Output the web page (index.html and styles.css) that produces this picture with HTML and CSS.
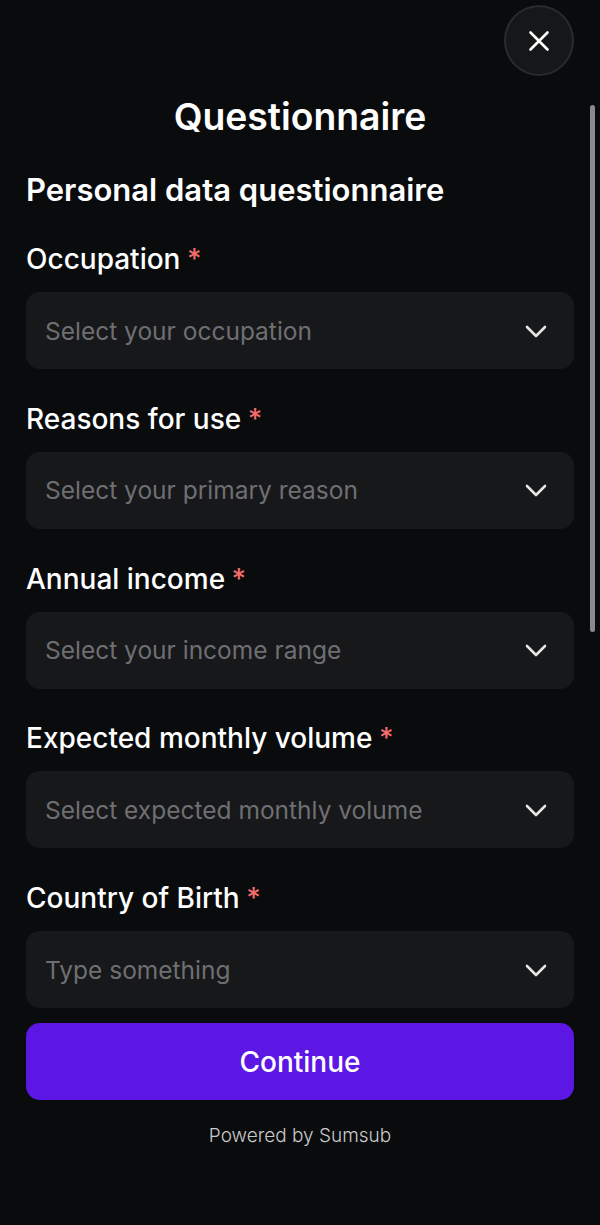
FILE: index.html
```html
<!DOCTYPE html>
<html lang="en">
<head>
    <meta charset="UTF-8">
    <meta name="viewport" content="width=device-width, initial-scale=1.0">
    <title>Questionnaire</title>
    <link rel="stylesheet" href="styles.css">
</head>
<body>
    <div class="page">
        <div class="top-bar">
            <button class="close-btn" type="button" aria-label="Close">
                <svg width="24" height="24" viewBox="0 0 24 24" fill="none" stroke="#fff" stroke-width="2.6" stroke-linecap="round">
                    <path d="M3.5 3.5L20.5 20.5M20.5 3.5L3.5 20.5"/>
                </svg>
            </button>
        </div>
        <h1>Questionnaire</h1>
        <form class="form">
            <h2>Personal data questionnaire</h2>
            <div class="field">
                <label>Occupation <span class="req">*</span></label>
                <div class="select">
                    <span>Select your occupation</span>
                    <svg class="chevron" width="22" height="14" viewBox="0 0 22 14" fill="none"><path d="M2 3L11 12L20 3"/></svg>
                </div>
            </div>
            <div class="field">
                <label>Reasons for use <span class="req">*</span></label>
                <div class="select">
                    <span>Select your primary reason</span>
                    <svg class="chevron" width="22" height="14" viewBox="0 0 22 14" fill="none"><path d="M2 3L11 12L20 3"/></svg>
                </div>
            </div>
            <div class="field">
                <label>Annual income <span class="req">*</span></label>
                <div class="select">
                    <span>Select your income range</span>
                    <svg class="chevron" width="22" height="14" viewBox="0 0 22 14" fill="none"><path d="M2 3L11 12L20 3"/></svg>
                </div>
            </div>
            <div class="field">
                <label>Expected monthly volume <span class="req">*</span></label>
                <div class="select">
                    <span>Select expected monthly volume</span>
                    <svg class="chevron" width="22" height="14" viewBox="0 0 22 14" fill="none"><path d="M2 3L11 12L20 3"/></svg>
                </div>
            </div>
            <div class="field">
                <label>Country of Birth <span class="req">*</span></label>
                <div class="select">
                    <span>Type something</span>
                    <svg class="chevron" width="22" height="14" viewBox="0 0 22 14" fill="none"><path d="M2 3L11 12L20 3"/></svg>
                </div>
            </div>
            <button class="continue-btn" type="submit">Continue</button>
        </form>
        <p class="powered">Powered by Sumsub</p>
        <div class="scroll-thumb"></div>
    </div>
</body>
</html>
```

FILE: styles.css
```css
* {
    box-sizing: border-box;
}

body {
    margin: 0;
    font-family: Inter, "Liberation Sans", sans-serif;
    background-color: #0a0b0d;
    color: #fff;
}

.page {
    position: relative;
    height: 1225px;
    padding: 5px 26px 0;
    overflow: hidden;
}

.top-bar {
    display: flex;
    justify-content: flex-end;
}

.close-btn {
    display: flex;
    align-items: center;
    justify-content: center;
    width: 70px;
    height: 71px;
    padding: 0;
    background-color: #161719;
    border: 2px solid #2a2b2d;
    border-radius: 50%;
}

h1 {
    margin: 18px 0 0;
    font-size: 37.3px;
    line-height: 46px;
    font-weight: 600;
    text-align: center;
}

h2 {
    margin: 30px 0 0;
    font-size: 31px;
    line-height: 40px;
    font-weight: 600;
}

.form {
    display: flex;
    flex-direction: column;
}

.field {
    display: flex;
    flex-direction: column;
    gap: 15px;
    margin-top: 31px;
}

.field + .field {
    margin-top: 31.75px;
}

.field label {
    font-size: 28px;
    line-height: 36px;
    font-weight: 500;
}

.req {
    color: #f56c6c;
    margin-left: -1px;
}

.select {
    display: flex;
    align-items: center;
    justify-content: space-between;
    height: 77px;
    padding: 0 27px 0 19px;
    background-color: #17181a;
    border-radius: 14px;
    font-size: 24.5px;
    color: #6f6f72;
}

.chevron path {
    stroke: #e6e6e6;
    stroke-width: 2.6;
    stroke-linecap: round;
    stroke-linejoin: round;
}

.continue-btn {
    height: 77px;
    margin-top: 15px;
    background-color: #5c17e5;
    color: #fff;
    border: none;
    border-radius: 14px;
    font-family: inherit;
    font-size: 28px;
    font-weight: 500;
}

.powered {
    margin: 24px 0 0;
    text-align: center;
    font-size: 19px;
    line-height: 24px;
    font-weight: 300;
    color: #c9c9ca;
}

.scroll-thumb {
    position: absolute;
    left: 590px;
    top: 105px;
    width: 5px;
    height: 527px;
    background-color: #8a8a8c;
    border-radius: 3px;
}
```
